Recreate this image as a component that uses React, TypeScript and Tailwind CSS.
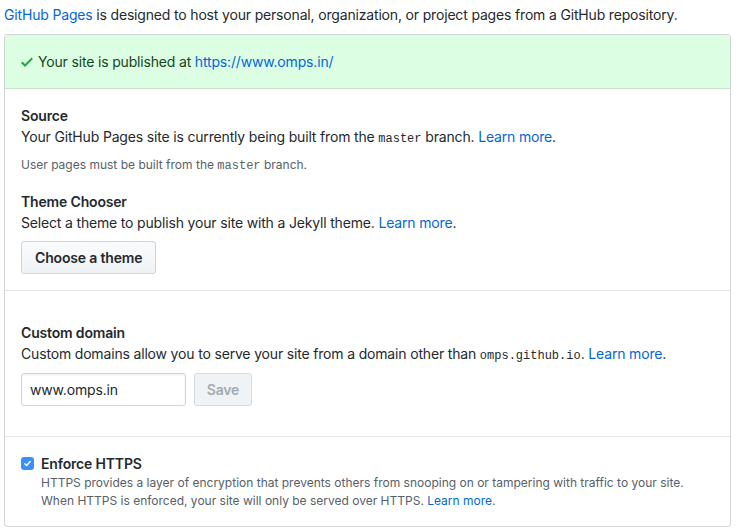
import React from 'react'

const sans = 'font-["Inter","Liberation_Sans",Helvetica,Arial,sans-serif]'
const mono = 'font-["Liberation_Mono",monospace] text-[12px] leading-none tracking-normal'

function Link({ children }: { children: React.ReactNode }): React.ReactElement {
  return <a className="text-[#0366d6]">{children}</a>
}

function CheckIcon(): React.ReactElement {
  return (
    <svg width="12" height="16" viewBox="0 0 12 16" className="fill-[#28a745]">
      <path d="M12 5l-8 8-4-4 1.5-1.5L4 10l6.5-6.5L12 5z" />
    </svg>
  )
}

export default function App(): React.ReactElement {
  return (
    <div className={`w-[739px] h-[530px] bg-white px-[4px] pt-[4px] text-[14px] leading-[21px] tracking-[-0.17px] text-[#24292e] ${sans}`}>
      <p>
        <Link>GitHub Pages</Link> is designed to host your personal, organization, or project pages from a GitHub
        repository.
      </p>

      <div className="mt-[9px] w-[727px] rounded-[3px] border border-[#d1d5da]">
        <div className="flex items-center gap-[5px] border-b border-[#c8e1cf] bg-[#dcffe4] px-[16px] py-[16px] text-[#144620]">
          <CheckIcon />
          <span>
            Your site is published at <Link>https://www.omps.in/</Link>
          </span>
        </div>

        <div className="border-b border-[#e1e4e8] px-[16px] pt-[16px] pb-[16px]">
          <h3 className="font-semibold">Source</h3>
          <p>
            Your GitHub Pages site is currently being built from the <code className={mono}>master</code> branch.{' '}
            <Link>Learn more</Link>.
          </p>
          <p className="mt-[9px] text-[12px] leading-[18px] tracking-normal text-[#586069]">
            User pages must be built from the <code className={mono}>master</code> branch.
          </p>
          <h3 className="mt-[17px] font-semibold">Theme Chooser</h3>
          <p>
            Select a theme to publish your site with a Jekyll theme. <Link>Learn more</Link>.
          </p>
          <button className="mt-[8px] h-[33px] rounded-[3px] border border-[#d1d5da] bg-gradient-to-b from-[#fafbfc] to-[#eff3f6] px-[13px] font-semibold">
            Choose a theme
          </button>
        </div>

        <div className="border-b border-[#e1e4e8] px-[16px] pt-[31px] pb-[30px]">
          <h3 className="font-semibold">Custom domain</h3>
          <p>
            Custom domains allow you to serve your site from a domain other than{' '}
            <code className={mono}>omps.github.io</code>. <Link>Learn more</Link>.
          </p>
          <div className="mt-[9px] flex gap-[8px]">
            <div className="flex h-[33px] w-[165px] items-center rounded-[3px] border border-[#d1d5da] px-[8px] shadow-[inset_0_1px_2px_rgba(27,31,35,0.075)]">
              www.omps.in
            </div>
            <button className="h-[33px] w-[58px] rounded-[3px] border border-[#d8dbde] bg-[#eff3f6] font-semibold text-[#a3aab1]">
              Save
            </button>
          </div>
        </div>

        <div className="px-[16px] pt-[16px] pb-[16px]">
          <div className="flex items-center gap-[7px]">
            <span className="flex h-[13px] w-[13px] items-center justify-center rounded-[3px] bg-[#3b8ff6]">
              <svg width="9" height="9" viewBox="0 0 10 10">
                <path d="M2 5.2l2 2 4-4.4" stroke="white" strokeWidth="1.6" fill="none" strokeLinecap="round" strokeLinejoin="round" />
              </svg>
            </span>
            <span className="font-semibold">Enforce HTTPS</span>
          </div>
          <p className="pl-[20px] text-[12px] leading-[18px] tracking-normal text-[#586069]">
            HTTPS provides a layer of encryption that prevents others from snooping on or tampering with traffic to your site.
            <br />
            When HTTPS is enforced, your site will only be served over HTTPS. <Link>Learn more</Link>.
          </p>
        </div>
      </div>
    </div>
  )
}
